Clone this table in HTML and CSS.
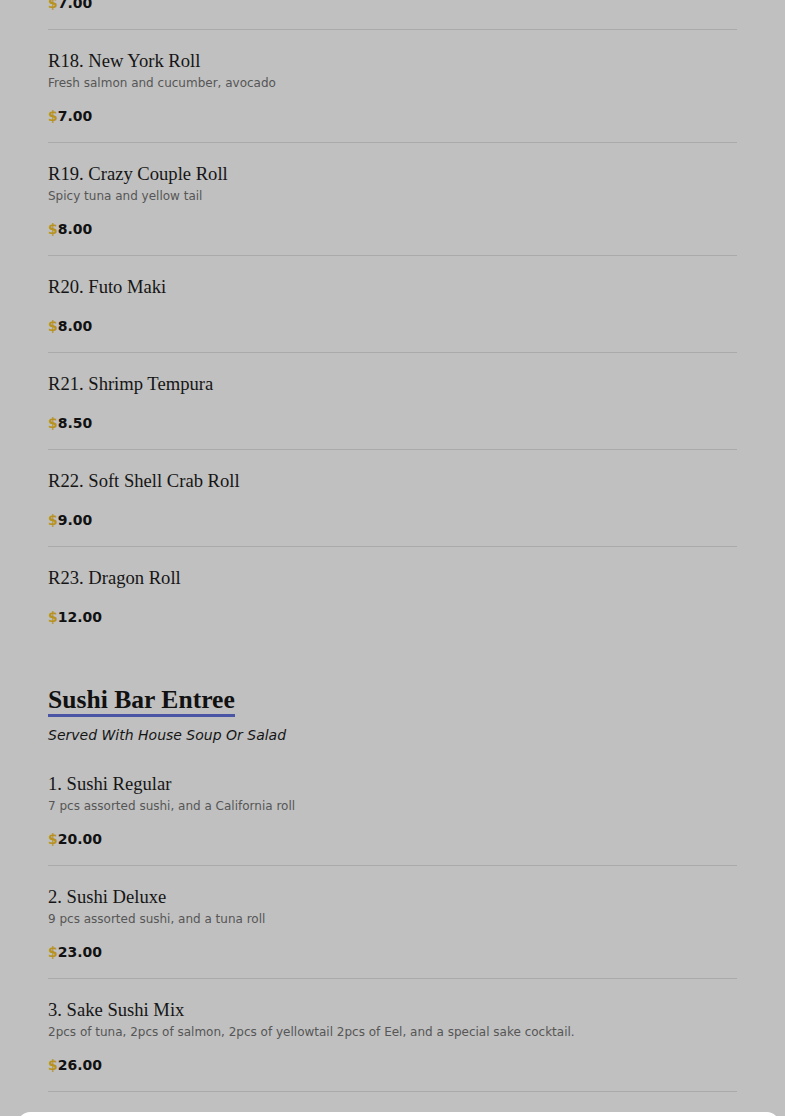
FILE: index.html
```html
<!DOCTYPE html>
<html lang="en">
<head>
<meta charset="utf-8">
<title>Menu</title>
<link rel="stylesheet" href="styles.css">
</head>
<body>
<main class="menu">
  <section class="section">
    <div class="item item-partial">
      <div class="price"><span class="cur">$</span>7.00</div>
    </div>
    <div class="item">
      <h3 class="name">R18. New York Roll</h3>
      <p class="desc">Fresh salmon and cucumber, avocado</p>
      <div class="price"><span class="cur">$</span>7.00</div>
    </div>
    <div class="item">
      <h3 class="name">R19. Crazy Couple Roll</h3>
      <p class="desc">Spicy tuna and yellow tail</p>
      <div class="price"><span class="cur">$</span>8.00</div>
    </div>
    <div class="item">
      <h3 class="name">R20. Futo Maki</h3>
      <div class="price"><span class="cur">$</span>8.00</div>
    </div>
    <div class="item">
      <h3 class="name">R21. Shrimp Tempura</h3>
      <div class="price"><span class="cur">$</span>8.50</div>
    </div>
    <div class="item">
      <h3 class="name">R22. Soft Shell Crab Roll</h3>
      <div class="price"><span class="cur">$</span>9.00</div>
    </div>
    <div class="item item-last">
      <h3 class="name">R23. Dragon Roll</h3>
      <div class="price"><span class="cur">$</span>12.00</div>
    </div>
  </section>

  <section class="section section-new">
    <h2 class="section-title">Sushi Bar Entree</h2>
    <p class="section-sub">Served With House Soup Or Salad</p>
    <div class="item">
      <h3 class="name">1. Sushi Regular</h3>
      <p class="desc">7 pcs assorted sushi, and a California roll</p>
      <div class="price"><span class="cur">$</span>20.00</div>
    </div>
    <div class="item">
      <h3 class="name">2. Sushi Deluxe</h3>
      <p class="desc">9 pcs assorted sushi, and a tuna roll</p>
      <div class="price"><span class="cur">$</span>23.00</div>
    </div>
    <div class="item">
      <h3 class="name">3. Sake Sushi Mix</h3>
      <p class="desc">2pcs of tuna, 2pcs of salmon, 2pcs of yellowtail 2pcs of Eel, and a special sake cocktail.</p>
      <div class="price"><span class="cur">$</span>26.00</div>
    </div>
  </section>
</main>
<div class="sheet"></div>
</body>
</html>
```

FILE: styles.css
```css
html, body {
  margin: 0;
  padding: 0;
  background: #c0c0c0;
  overflow: hidden;
}

.menu {
  width: 689px;
  margin: -7px 0 0 48px;
  font-family: "DejaVu Sans", sans-serif;
  color: #121212;
}

.section {
  display: flex;
  flex-direction: column;
}

.section-new {
  margin-top: 42px;
  align-items: flex-start;
}

.section-new .item {
  align-self: stretch;
}

.item {
  display: flex;
  flex-direction: column;
  padding: 16px 0 16px 0;
  border-bottom: 1px solid #aaaaaa;
}

.item-partial {
  padding-top: 0;
}

.item-last {
  border-bottom: none;
}

.name {
  margin: 0;
  font-family: "Liberation Serif", "Times New Roman", serif;
  font-weight: 400;
  font-size: 18.6px;
  line-height: 29px;
  color: #151515;
}

.desc {
  margin: 0;
  font-size: 12px;
  line-height: 16px;
  color: #565656;
}

.price {
  margin-top: 15px;
  font-size: 14px;
  font-weight: 700;
  line-height: 20px;
  color: #111111;
}

.item .name + .price {
  margin-top: 15px;
}

.item-partial .price {
  margin-top: 0;
}

.cur {
  color: #b8921e;
}

.section-title {
  margin: 0;
  font-family: "Liberation Serif", "Times New Roman", serif;
  font-weight: 700;
  font-size: 25.6px;
  line-height: 29px;
  color: #111111;
  border-bottom: 3px solid #4a55a6;
}

.section-sub {
  margin: 9px 0 9px 0;
  font-style: italic;
  font-size: 14px;
  line-height: 18px;
  color: #151515;
}

.sheet {
  position: fixed;
  left: 18px;
  right: 6px;
  top: 1112px;
  height: 40px;
  background: #ffffff;
  border-radius: 12px 12px 0 0;
}
```
